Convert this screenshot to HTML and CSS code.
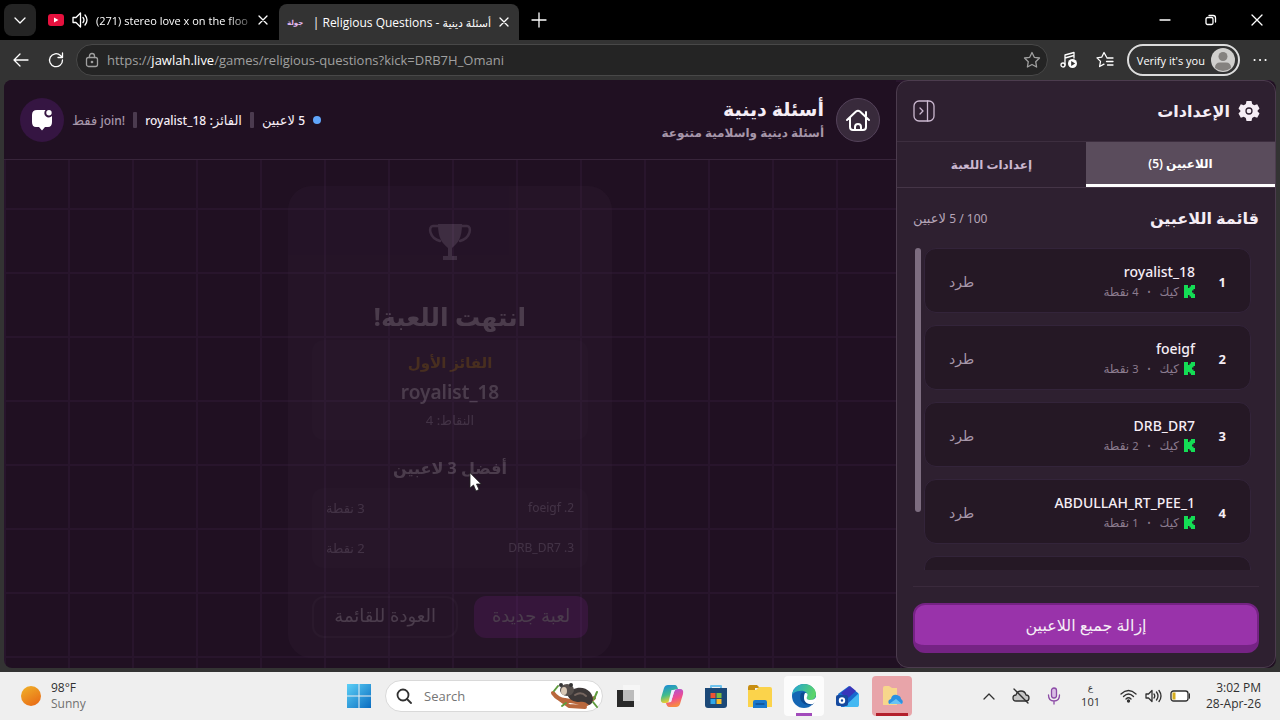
FILE: index.html
```html
<!DOCTYPE html>
<html lang="ar">

<head>
  <meta charset="UTF-8" />
  <meta name="viewport" content="width=device-width, initial-scale=1.0" />
  <title>أسئلة دينية - Religious Questions</title>
  <link rel="stylesheet" href="styles.css">
</head>

<body>

  <!-- Browser tabs -->
  <div class="tabstrip">
    <button class="tab-menu" aria-label="Tab menu">
      <svg width="14" height="14" viewBox="0 0 14 14"><path d="M2 5l5 5 5-5" /></svg>
    </button>
    <div class="tab">
      <svg class="youtube" width="16" height="12" viewBox="0 0 16 12"><rect width="16" height="12" rx="3" fill="#e6113e" stroke="none" /><path d="M6 3.500v5l4.500-2.500z" fill="#fff" stroke="none" /></svg>
      <svg width="16" height="16" viewBox="0 0 16 16"><path d="M1 5.500h3L8.500 1v14L4 10.500H1zM11 5.500q2 2.500 0 5M13 3q4 5 0 10" /></svg>
      <span class="tab-title fade">(271) stereo love x on the floo</span>
      <button class="tab-close" aria-label="Close tab"><svg width="10" height="10" viewBox="0 0 10 10"><path d="M1 1l8 8M9 1L1 9" /></svg></button>
    </div>
    <div class="tab active">
      <span class="favicon">جولة</span>
      <span class="tab-title end" dir="ltr">| Religious Questions - <span class="ar">أسئلة دينية</span></span>
      <button class="tab-close" aria-label="Close tab"><svg width="10" height="10" viewBox="0 0 10 10"><path d="M1 1l8 8M9 1L1 9" /></svg></button>
    </div>
    <button class="new-tab" aria-label="New tab"><svg width="16" height="16" viewBox="0 0 16 16"><path d="M8 1v14M1 8h14" /></svg></button>
    <div class="window-buttons">
      <button aria-label="Minimize"><svg width="12" height="12" viewBox="0 0 12 12"><path d="M1 6h10" /></svg></button>
      <button aria-label="Restore"><svg width="12" height="12" viewBox="0 0 12 12"><rect x="1" y="3.500" width="7" height="7" rx="1.500" /><path d="M4 1.500h4q2.500 0 2.500 2.500v4" /></svg></button>
      <button aria-label="Close"><svg width="12" height="12" viewBox="0 0 12 12"><path d="M1 1l10 10M11 1L1 11" /></svg></button>
    </div>
  </div>

  <!-- Address bar -->
  <div class="toolbar">
    <button class="nav-btn" aria-label="Back"><svg width="18" height="18" viewBox="0 0 18 18"><path d="M16 9H2M8 3L2 9l6 6" /></svg></button>
    <button class="nav-btn" aria-label="Reload"><svg width="16" height="16" viewBox="0 0 16 16"><path d="M14.500 8A6.500 6.500 0 1 1 12.500 3.500L14 5M14.500 1v4.500H10" /></svg></button>
    <div class="address">
      <svg width="14" height="16" viewBox="0 0 14 16"><rect x="1.500" y="5.500" width="11" height="9" rx="2" /><path d="M4.500 5.500V4q0-2.500 2.500-2.500T9.500 4v1.500" /><circle cx="7" cy="10" r=".7" /></svg>
      <a class="url" href="#">https://<b>jawlah.live</b>/games/religious-questions?kick=DRB7H_Omani</a>
      <svg width="18" height="18" viewBox="0 0 18 18"><path d="M9 1.500l2.300 4.800 5.200.7-3.800 3.700.9 5.300L9 13.500 4.400 16l.9-5.300L1.500 7l5.200-.7z" /></svg>
    </div>
    <button class="nav-btn" aria-label="Media"><svg width="18" height="18" viewBox="0 0 18 18"><path d="M5 14V4l9-2.500V7M5 7l9-2.500" /><circle cx="3" cy="14" r="2" /><circle cx="12.500" cy="12.500" r="4.500" fill="#fff" stroke="none" /><path d="M11.200 10v5l4-2.500z" fill="#333" stroke="none" /></svg></button>
    <button class="nav-btn" aria-label="Favorites"><svg width="18" height="18" viewBox="0 0 18 18"><path d="M10.500 6L8 1.500 5.700 6.200l-4.700.7 3.500 3.500-.9 5.100L8 13.200M11 7h6M10.500 10.500H17M11.500 14H17" /></svg></button>
    <button class="verify">Verify it's you
      <svg width="24" height="24" viewBox="0 0 24 24"><circle cx="12" cy="12" r="12" fill="#d0cfcd" stroke="none" /><circle cx="12" cy="8.500" r="4.500" fill="#85827f" stroke="none" /><path d="M4 20q0-5.500 5-5.500h6q5 0 5 5.500-8 6-16 0z" fill="#85827f" stroke="none" /></svg>
    </button>
    <button class="nav-btn" aria-label="More"><svg width="14" height="4" viewBox="0 0 14 4"><path d="M1.500 2h.1M7 2h.1M12.500 2h.1" stroke-width="2" /></svg></button>
  </div>

  <!-- Game page -->
  <div class="page" dir="rtl">
    <main class="game">
      <header class="game-header">
        <a class="round home" href="#" aria-label="الرئيسية"><svg width="26" height="26" viewBox="0 0 26 26"><path d="M2 13L11 4.500q2-1.500 4 0l9 8.500M5 10.500V20q0 3 3 3h10q3 0 3-3v-9.500M21 9V5M10 23v-3q0-3 3-3t3 3v3" stroke-width="2" /></svg></a>
        <div class="titles">
          <h1>أسئلة دينية</h1>
          <p>أسئلة دينية واسلامية متنوعة</p>
        </div>
        <div class="status">
          <span class="dot"></span>
          <span><span class="latin">5</span> لاعبين</span>
          <span class="sep"></span>
          <span>الفائز: <span class="latin">royalist_18</span></span>
          <span class="sep"></span>
          <span class="muted" dir="ltr"><span>فقط</span> <span class="latin">join!</span></span>
        </div>
        <button class="round chat" aria-label="الدردشة"><svg width="22" height="22" viewBox="0 0 22 22"><path d="M6 1h8.500a4.300 4.300 0 0 0 6.500 6v6q0 5-4 5h-3l-3 3.500L8 18H5q-4 0-4-5V6q0-5 5-5z" fill="#fff" stroke="none" /><circle cx="18" cy="3.700" r="2.700" fill="#fff" stroke="none" /></svg></button>
      </header>

      <section class="stage">
        <div class="result">
          <svg class="trophy" width="44" height="40" viewBox="0 0 44 40"><path d="M10 2h24c0 14-4 19-10 24v8h5v4H15v-4h5v-8C14 21 10 16 10 2z" fill="currentColor" stroke="none" /><path d="M10 4H5C0 4 1 16 12 19M34 4h5c5 0 4 12-7 15" stroke-width="2.500" /></svg>
          <h2>انتهت اللعبة!</h2>
          <div class="winner">
            <p class="gold">الفائز الأول</p>
            <p class="name">royalist_18</p>
            <p class="points">النقاط: 4</p>
          </div>
          <h3>أفضل 3 لاعبين</h3>
          <ul class="top">
            <li><span class="latin">2. foeigf</span><span>3 نقطة</span></li>
            <li><span class="latin">3. DRB_DR7</span><span>2 نقطة</span></li>
          </ul>
          <div class="actions">
            <button class="again">لعبة جديدة</button>
            <button class="back">العودة للقائمة</button>
          </div>
        </div>
      </section>
    </main>

    <aside class="sidebar">
      <div class="side-header">
        <svg width="22" height="22" viewBox="0 0 22 22"><path d="M8.500 1h5l.7 3 2 1.200 3-1 2.300 4.200L19.300 11l2.200 2.600-2.300 4.200-3-1-2 1.200-.7 3h-5l-.7-3-2-1.200-3 1L.5 13.600 2.700 11 .5 8.400l2.300-4.200 3 1 2-1.200z" fill="#f5edf5" stroke="none" /><circle cx="11" cy="11" r="3" stroke="#2e2030" /></svg>
        <h2>الإعدادات</h2>
        <button class="collapse" aria-label="إخفاء"><svg width="24" height="24" viewBox="0 0 24 24"><rect x="2" y="2" width="20" height="20" rx="5" /><path d="M15.500 2v20M8 9l3 3-3 3" /></svg></button>
      </div>
      <div class="side-tabs">
        <button class="active">اللاعبين (5)</button>
        <button>إعدادات اللعبة</button>
      </div>
      <div class="side-body">
        <div class="list-head">
          <h2>قائمة اللاعبين</h2>
          <span><span class="latin" dir="ltr">5 / 100</span> لاعبين</span>
        </div>
        <div class="list-wrap">
          <ol class="players" id="players"></ol>
          <div class="scroll-thumb"></div>
        </div>
        <div class="side-footer">
          <button class="remove-all">إزالة جميع اللاعبين</button>
        </div>
      </div>
    </aside>
  </div>

  <!-- Taskbar -->
  <div class="taskbar">
    <div class="weather">
      <span class="sun"></span>
      <div>98°F<br><span>Sunny</span></div>
    </div>
    <div class="apps">
      <button aria-label="Start"><svg width="24" height="24" viewBox="0 0 24 24"><defs><linearGradient id="win" x2="1" y2="1"><stop stop-color="#5cd0f7" /><stop offset="1" stop-color="#0a6cc0" /></linearGradient></defs><path d="M0 0h11.500v11.500H0zM12.500 0H24v11.500H12.500zM0 12.500h11.500V24H0zM12.500 12.500H24V24H12.500z" fill="url(#win)" stroke="none" /></svg></button>
      <label class="search">
        <svg width="16" height="16" viewBox="0 0 16 16"><circle cx="7" cy="7" r="5.500" stroke-width="1.800" /><path d="M11 11l4 4" stroke-width="1.800" /></svg>
        <input type="text" placeholder="Search" aria-label="Search" />
        <svg width="50" height="28" viewBox="0 0 50 28"><path d="M3 11q5 7 12 7l22 4 7-6M8 16l11 8 16 1" stroke="#b9683d" stroke-width="4" /><path d="M17 12c5-7 17-9 23-2 5 6 3 12-1 13-3-3-6-4-10-3-5 0-10-2-12-8z" fill="#3d3838" stroke="none" /><ellipse cx="17" cy="8" rx="7" ry="6" fill="#57504d" stroke="none" /><ellipse cx="14" cy="9" rx="3" ry="4" fill="#d9c8b5" stroke="none" /><circle cx="11" cy="3" r="2" fill="#333" stroke="none" /><circle cx="21" cy="3" r="2" fill="#333" stroke="none" /><path d="M4 9L8 4M44 17l3-7M43 20l4 5M12 24l4-3" stroke="#5f9b3e" stroke-width="2" /><path d="M25 13q6-4 11 1" stroke="#76665f" stroke-width="2" /></svg>
      </label>
      <button aria-label="Task view"><svg width="24" height="24" viewBox="0 0 24 24"><path d="M1 6h17v17H1z" fill="#292929" stroke="none" /><path d="M7 1h17v16H7z" fill="#f6f6f6" stroke="none" /><path d="M7 6h11v11H7z" fill="#bcbcbc" stroke="none" /></svg></button>
      <button aria-label="Copilot"><svg width="24" height="24" viewBox="0 0 24 24"><defs><linearGradient id="cp1" x2=".3" y2="1"><stop stop-color="#1685e0" /><stop offset=".6" stop-color="#42bd8b" /><stop offset="1" stop-color="#f3cf2a" /></linearGradient><linearGradient id="cp2" x2=".3" y2="1"><stop stop-color="#9b55e8" /><stop offset=".6" stop-color="#ef4c91" /><stop offset="1" stop-color="#f78a42" /></linearGradient></defs><path d="M8 1h7q2 0 3 4l-5 1-3 10q-1 3-4 3H4q-4 0-3-5L4 4q1-3 4-3z" fill="url(#cp1)" stroke="none" /><path d="M16 23H9q-2 0-3-4l5-1 3-10q1-3 4-3h2q4 0 3 5l-3 10q-1 3-4 3z" fill="url(#cp2)" stroke="none" /><path d="M13 6h-1.500L8.500 18H11l3-10 1-2z" fill="#eef" stroke="none" /></svg></button>
      <button aria-label="Store"><svg width="24" height="24" viewBox="0 0 24 24"><path d="M7 6V2h10v4" stroke="#6fc3ee" stroke-width="2" /><path d="M1 4h22v17q0 3-3 3H4q-3 0-3-3z" fill="#1b4877" stroke="none" /><path d="M6.500 9h5v5h-5z" fill="#ef5434" stroke="none" /><path d="M12.500 9h5v5h-5z" fill="#7cbb42" stroke="none" /><path d="M6.500 15h5v5h-5z" fill="#2fa8ea" stroke="none" /><path d="M12.500 15h5v5h-5z" fill="#fbbb25" stroke="none" /></svg></button>
      <button aria-label="File Explorer"><svg width="24" height="24" viewBox="0 0 24 24"><path d="M0 4q0-3 2-3h7l3 3h-5v4H0z" fill="#c88e12" stroke="none" /><path d="M0 6h8l3-3h11q2 0 2 2v18H0z" fill="#fbd34b" stroke="none" /><path d="M5 24v-6q0-2 2-2h10q2 0 2 2v6z" fill="#1a78cc" stroke="none" /><path d="M8 20h8" stroke="#114f92" /></svg></button>
      <button class="open" aria-label="Edge"><svg width="24" height="24" viewBox="0 0 24 24"><defs><linearGradient id="edge" x2="1" y2=".3"><stop stop-color="#20a3d8" /><stop offset="1" stop-color="#5ad46a" /></linearGradient></defs><circle cx="12" cy="12" r="12" fill="#1466b4" stroke="none" /><path d="M0 11C1 4 6 0 12 0c7 0 12 5 12 10 0 4-3 6-6 6-2 0-4-1-3-3 2-4-3-7-7-6-4 0-7 2-8 4z" fill="url(#edge)" stroke="none" /><path d="M9 9c-3 7 2 13 11 12l2-2c-5 2-10-1-10-5 0-2 1-3 2-4-1-2-3-2-5-1z" fill="#0d4a93" stroke="none" /><path d="M13 9c3 0 3 2 2 4s1 3 3 3c3 0 5-1 6-3v4l-3 3c-5 1-9-2-9-6 0-2 0-3 1-5z" fill="#fff" stroke="none" /></svg></button>
      <button aria-label="Outlook"><svg width="24" height="24" viewBox="0 0 24 24"><path d="M2 10L13 2l9 7v12q0 2-2 2H5z" fill="#1769ce" stroke="none" /><path d="M5 9l9-7 6 5-9 8z" fill="#3836ba" stroke="none" /><path d="M23 9v12q0 2-2 2H8z" fill="#43b8f2" stroke="none" /><rect y="11" width="12" height="11" rx="2" fill="#164a9f" stroke="none" /><circle cx="6" cy="16.500" r="2.200" stroke="#fff" stroke-width="2" /></svg></button>
      <button class="alert" aria-label="OneDrive folder"><svg width="24" height="24" viewBox="0 0 24 24"><path d="M3 4q0-2 2-2h4l3 2h5v17H3z" fill="#f7d68b" stroke="none" /><path d="M9 20q-2-4 2-5 1-5 6-4 4 1 4 4 3 2 1 5z" fill="#2b91e2" stroke="none" /><path d="M9 20l7-5 6 5z" fill="#69c3f5" stroke="none" /></svg></button>
    </div>
    <div class="tray">
      <svg width="12" height="8" viewBox="0 0 12 8"><path d="M1 7l5-5 5 5" /></svg>
      <svg width="18" height="16" viewBox="0 0 18 16"><path d="M4 13q-3 0-3-3t3-3q1-4 5-4t5 4q3 0 3 3t-3 3z" fill="#c5c5c5" /><path d="M2 1l14 14" /></svg>
      <svg class="mic" width="14" height="18" viewBox="0 0 14 18"><rect x="4.500" y="1" width="5" height="10" rx="2.500" fill="#d9bce6" /><path d="M1.500 8q0 6 5.500 6t5.500-6M7 14v3" /></svg>
      <div class="lang"><span class="ar">ع</span><span>101</span></div>
      <div class="net">
        <svg width="17" height="14" viewBox="0 0 17 14"><path d="M1 5q7.500-7 15 0M3.500 7.500q5-5 10 0M6 10q2.500-2.500 5 0" /><circle cx="8.500" cy="12" r="1" fill="#333" /></svg>
        <svg width="17" height="14" viewBox="0 0 17 14"><path d="M1 5h2.500L7 1.500v11L3.500 9H1zM9 5q1.500 2 0 4M11.500 3q3 4 0 8M14 1.500q4 5.500 0 11" /></svg>
        <svg width="20" height="12" viewBox="0 0 20 12"><rect x="1" y="1" width="17" height="10" rx="2.500" fill="#fff" /><rect x="2.500" y="2.500" width="3" height="7" fill="#d5ad1d" stroke="none" /><path d="M19.500 4v4" /></svg>
      </div>
      <div class="clock">3:02 PM<br>28-Apr-26</div>
    </div>
  </div>

  <svg class="cursor" width="14" height="20" viewBox="0 0 14 20"><path d="M1 1v15l3.500-3 2.500 6 3-1.500-2.500-5.500H12z" fill="#fff" stroke="#222" stroke-width=".8" /></svg>

  <script>
    const players = [
      { name: "royalist_18", points: 4 },
      { name: "foeigf", points: 3 },
      { name: "DRB_DR7", points: 2 },
      { name: "ABDULLAH_RT_PEE_1", points: 1 },
      { name: "", points: 0 }
    ];

    document.getElementById("players").innerHTML = players.map((p, i) => p.name ? `
      <li class="player">
        <b class="rank">${i + 1}</b>
        <div class="info">
          <p class="player-name">${p.name}</p>
          <p class="meta">
            <svg width="11" height="13" viewBox="0 0 11 13"><path d="M0 0h4v3h1.500V1.500H7V0h4v4H9.500v1.500H8v2h1.500V9H11v4H7v-1.500H5.500V10H4v3H0z" fill="#14dd55" stroke="none" /></svg>
            <span>كيك</span><span class="bullet">•</span><span><span class="latin">${p.points}</span> نقطة</span>
          </p>
        </div>
        <button class="kick">طرد</button>
      </li>` : `<li class="player"></li>`).join("");
  </script>

</body>

</html>
```
FILE: styles.css
```css
* {
  box-sizing: border-box;
}

body {
  margin: 0;
  height: 100vh;
  display: flex;
  flex-direction: column;
  overflow: hidden;
  background: #333;
  color: #fff;
  font-family: "Open Sans", "DejaVu Sans", sans-serif;
  font-size: 12px;
}

h1, h2, h3, p, ul, ol {
  margin: 0;
  padding: 0;
  list-style: none;
}

button {
  font-family: inherit;
  color: inherit;
  background: none;
  border: none;
  padding: 0;
}

svg {
  flex: none;
  display: block;
  fill: none;
  stroke: currentColor;
  stroke-width: 1.3;
  stroke-linecap: round;
  stroke-linejoin: round;
}

/* tabs */
.tabstrip {
  height: 40px;
  flex: none;
  display: flex;
  align-items: center;
  background: #000;
}

.tab-menu {
  width: 32px;
  height: 32px;
  margin: 0 4px;
  display: grid;
  place-items: center;
  background: #242424;
  border-radius: 8px;
}

.tab {
  width: 238px;
  height: 40px;
  display: flex;
  align-items: center;
  gap: 8px;
  padding: 0 10px 0 8px;
}

.tab.active {
  width: 240px;
  height: 36px;
  align-self: flex-end;
  background: #333;
  border-radius: 8px 8px 0 0;
}

.tab-title {
  flex: 1;
  min-width: 0;
  white-space: nowrap;
}

.tab-title.fade {
  font-size: 11px;
  mask-image: linear-gradient(to right, #000 85%, #0004);
}

.tab-title.end {
  text-align: right;
  font-size: 12px;
}

.tab-title .ar {
  font-size: 11px;
}

.favicon {
  font-size: 7px;
  font-weight: bold;
  color: #e3b8f0;
}

.tab + .tab {
  margin-left: 1px;
}

.new-tab {
  margin-left: 12px;
}

.window-buttons {
  margin-left: auto;
  display: flex;
  gap: 34px;
  padding-right: 17px;
}

/* address bar */
.toolbar {
  height: 40px;
  flex: none;
  display: flex;
  align-items: center;
  gap: 18px;
  padding: 0 13px 0 12px;
}

.address {
  flex: 1;
  height: 32px;
  display: flex;
  align-items: center;
  gap: 8px;
  padding: 0 6px 0 8px;
  margin: 0 -6px;
  background: #242424;
  border: 1px solid #484848;
  border-radius: 16px;
  color: #a0a0a0;
}

.url {
  flex: 1;
  font-size: 13px;
  color: #a0a0a0;
  text-decoration: none;
}

.url b {
  font-weight: 400;
  color: #fff;
}

.verify {
  height: 32px;
  display: flex;
  align-items: center;
  gap: 6px;
  padding: 0 3px 0 8px;
  margin: 0 -5px;
  border: 2px solid #ddd;
  border-radius: 16px;
  font-size: 11px;
}

/* game */
.page {
  flex: 1;
  min-height: 0;
  display: flex;
  margin: 0 4px 4px;
  border-radius: 8px;
  overflow: hidden;
  color: #f5edf5;
  font-family: "Noto Sans", "DejaVu Sans", sans-serif;
  background-color: #201022;
  background-image:
    linear-gradient(to right, #28152c 2px, transparent 2px),
    linear-gradient(to bottom, #28152c 2px, transparent 2px);
  background-size: 64px 64px;
}

.game {
  flex: 1;
  min-width: 0;
  display: flex;
  flex-direction: column;
}

.game-header {
  height: 80px;
  flex: none;
  display: flex;
  align-items: center;
  gap: 12px;
  padding: 0 16px;
  background: #201022;
  border-bottom: 1px solid #37243a;
}

.round {
  width: 44px;
  height: 44px;
  flex: none;
  display: grid;
  place-items: center;
  border-radius: 50%;
  color: #fff;
}

.home {
  background: #382a3b;
  border: 1px solid #54425a;
}

.chat {
  background: #351542;
  margin-right: -4px;
}

.titles {
  padding-bottom: 2px;
}

.titles h1 {
  font-size: 19px;
  line-height: 28px;
}

.titles p {
  font-size: 12px;
  line-height: 20px;
  font-weight: 600;
  color: #a797aa;
}

.status {
  margin-right: auto;
  display: flex;
  align-items: center;
  gap: 8px;
  font-size: 13px;
  font-weight: 500;
  white-space: nowrap;
}

.status .latin {
  font-size: 12px;
}

.status .muted {
  color: #a797aa;
}

.dot {
  width: 8px;
  height: 8px;
  border-radius: 50%;
  background: #60a5fa;
}

.sep {
  width: 4px;
  height: 16px;
  border-radius: 1px;
  background: #4b3b4f;
}

.stage {
  flex: 1;
  min-height: 0;
  display: flex;
  justify-content: center;
  align-items: flex-start;
  padding-top: 26px;
}

.result {
  width: 324px;
  padding: 36px 24px 20px;
  display: flex;
  flex-direction: column;
  align-items: center;
  text-align: center;
  background: #3a263d;
  border-radius: 24px;
  opacity: .2;
}

.trophy {
  color: #b8a4be;
}

.result h2 {
  margin-top: 36px;
  font-size: 25px;
  line-height: 36px;
}

.winner {
  width: 100%;
  margin-top: 6px;
  padding: 8px 0;
  background: #433046;
  border-radius: 12px;
}

.gold {
  color: #e6a814;
  font-size: 15px;
  line-height: 28px;
  font-weight: bold;
}

.name {
  font-size: 19px;
  line-height: 32px;
  font-weight: 600;
}

.points {
  font-size: 13px;
  line-height: 24px;
  color: #cbb8d0;
}

.result h3 {
  margin-top: 16px;
  font-size: 16px;
  line-height: 24px;
}

.top {
  width: 100%;
  margin-top: 8px;
  padding: 0 14px;
  background: #433046;
  border-radius: 12px;
  font-size: 13px;
  color: #cbb8d0;
}

.top .latin {
  font-size: 12px;
}

.top li {
  display: flex;
  justify-content: space-between;
  line-height: 40px;
}

.actions {
  width: 100%;
  display: flex;
  gap: 16px;
  margin-top: 28px;
}

.actions button {
  height: 42px;
  padding-bottom: 4px;
  border-radius: 12px;
  font-size: 18px;
  white-space: nowrap;
}

.again {
  flex: 4;
  background: #8d2fa0;
}

.back {
  flex: 5;
  border: 2px solid #524055;
}

/* sidebar */
.sidebar {
  width: 380px;
  flex: none;
  order: -1;
  display: flex;
  flex-direction: column;
  background: #2e2030;
  border: 1px solid #4c3c4e;
  border-radius: 12px;
}

.side-header {
  height: 60px;
  flex: none;
  display: flex;
  align-items: center;
  gap: 8px;
  padding: 0 15px;
}

.side-header h2 {
  font-size: 16px;
}

.collapse {
  margin-right: auto;
  color: #cbb8d0;
}

.side-tabs {
  height: 47px;
  flex: none;
  display: flex;
  border-top: 1px solid #3d2e3f;
  border-bottom: 1px solid #453547;
}

.side-tabs button {
  flex: 1;
  font-size: 12px;
  font-weight: 600;
  color: #cbb8d0;
}

.side-tabs .active {
  background: #5a4c5c;
  border-bottom: 3px solid #fff;
  color: #fff;
}

.side-body {
  flex: 1;
  min-height: 0;
  display: flex;
  flex-direction: column;
  padding: 16px 16px 14px;
}

.list-head {
  display: flex;
  justify-content: space-between;
  align-items: center;
  height: 28px;
  margin-bottom: 16px;
  font-size: 13px;
  color: #b5a5b8;
}

.list-head h2 {
  font-size: 16px;
  color: #f5edf5;
}

.list-head .latin {
  font-size: 12px;
}

.list-wrap {
  flex: 1;
  min-height: 0;
  display: flex;
  gap: 3px;
  padding-right: 8px;
}

.players {
  flex: 1;
  display: flex;
  flex-direction: column;
  gap: 12px;
  overflow: hidden;
}

.scroll-thumb {
  width: 6px;
  height: 82%;
  border-radius: 3px;
  background: #7d6d80;
  margin-left: 2px;
}

.player {
  height: 65px;
  flex: none;
  display: flex;
  align-items: center;
  padding: 2px 24px 0;
  background: #251825;
  border: 1px solid #33243a;
  border-radius: 12px;
}

.rank {
  width: 8px;
  font-size: 13px;
  margin-left: 23px;
}

.player-name {
  font-size: 14px;
  line-height: 20px;
  font-weight: 500;
}

.meta {
  display: flex;
  align-items: center;
  gap: 5px;
  font-size: 12px;
  line-height: 20px;
  color: #8c7c8f;
}

.meta .latin {
  font-size: 11px;
}

.bullet {
  font-size: 8px;
  margin: 0 4px;
}

.kick {
  margin-right: auto;
  font-size: 14px;
  color: #a797aa;
}

.side-footer {
  margin-top: 16px;
  padding-top: 16px;
  border-top: 1px solid #3a2a3c;
}

.remove-all {
  width: 100%;
  height: 50px;
  background: #9933aa;
  border: 2px solid #752384;
  border-bottom-width: 8px;
  border-radius: 12px;
  font-size: 16px;
}

/* taskbar */
.taskbar {
  height: 48px;
  flex: none;
  display: flex;
  align-items: center;
  background: #efefef;
  color: #303030;
}

.weather {
  width: 339px;
  display: flex;
  align-items: center;
  gap: 10px;
  padding-left: 21px;
  line-height: 16px;
}

.weather div span {
  color: #707070;
}

.sun {
  width: 20px;
  height: 20px;
  border-radius: 50%;
  background: linear-gradient(150deg, #f0b429, #e86414);
}

.apps {
  display: flex;
  align-items: center;
  gap: 4px;
}

.apps button {
  width: 40px;
  height: 40px;
  display: grid;
  place-items: center;
  border-radius: 4px;
}

.apps .open {
  background: linear-gradient(#a24bbb, #a24bbb) bottom / 16px 3px no-repeat #fcfcfc;
}

.apps .alert {
  background: linear-gradient(#b3202c, #b3202c) bottom / 32px 3px no-repeat #e8a4a9;
}

.search {
  width: 218px;
  height: 32px;
  display: flex;
  align-items: center;
  gap: 10px;
  padding: 0 2px 0 10px;
  margin: 0 1px 0 2px;
  background: #fff;
  border: 1px solid #d9d9d9;
  border-radius: 16px;
}

.search input {
  flex: 1;
  min-width: 0;
  border: none;
  outline: none;
  background: none;
  font-family: inherit;
  font-size: 13px;
}

.tray {
  margin-left: auto;
  display: flex;
  align-items: center;
  gap: 17px;
  padding-right: 19px;
}

.mic {
  color: #8c4ba6;
}

.lang {
  display: flex;
  flex-direction: column;
  align-items: center;
  margin: 0 3px;
  font-size: 11px;
  line-height: 16px;
}

.lang .ar {
  font-size: 9px;
  line-height: 12px;
}

.net {
  display: flex;
  align-items: center;
  gap: 8px;
}

.clock {
  text-align: right;
  line-height: 16px;
  margin-left: -1px;
}

.cursor {
  position: absolute;
  left: 469px;
  top: 472px;
}
```
